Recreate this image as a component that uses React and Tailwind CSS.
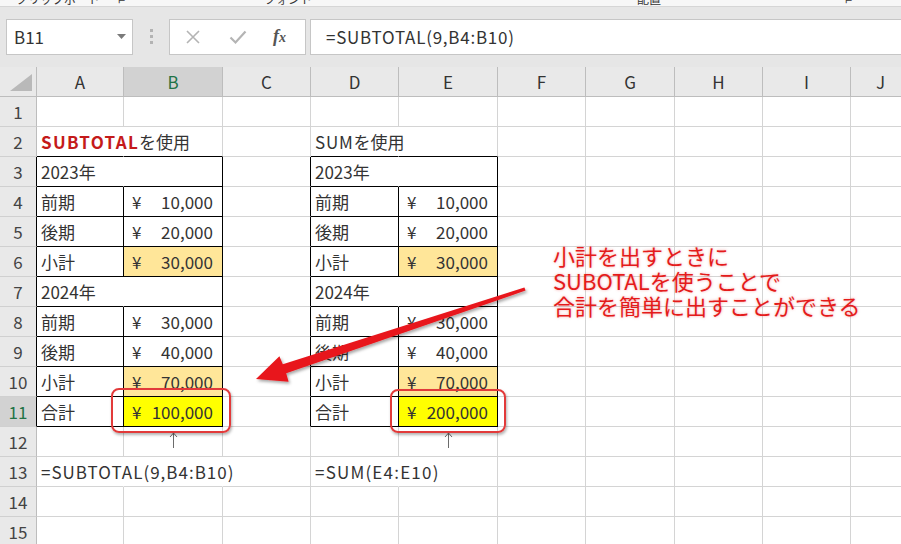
import React from 'react';

const COLS = ['A', 'B', 'C', 'D', 'E', 'F', 'G', 'H', 'I', 'J'];

// border colour classes, written out in full
const R_GRID = 'border-r-[#d4d4d4]';
const R_BLACK = 'border-r-black';
const R_NONE = 'border-r-transparent';
const B_GRID = 'border-b-[#d4d4d4]';
const B_BLACK = 'border-b-black';

const ORANGE = 'bg-[#ffe699]';
const YELLOW = 'bg-[#ffff00]';

function Money({ v }) {
  return (
    <div className="flex w-full justify-between pl-[8px] pr-[9px]">
      <span>¥</span>
      <span>{v}</span>
    </div>
  );
}

function UpArrow() {
  return (
    <div className="flex h-full w-full items-start justify-center pt-[5px]">
      <svg width="9" height="16" viewBox="0 0 9 16">
        <path d="M4.5 1 L4.5 16" stroke="#6b6b6b" strokeWidth="1" fill="none" />
        <path d="M1 5 L4.5 1 L8 5" stroke="#6b6b6b" strokeWidth="1" fill="none" />
      </svg>
    </div>
  );
}

const data = {
  2: {
    1: (
      <span className="whitespace-nowrap">
        <span className="font-bold tracking-[1.3px] text-[#c41a1a]">SUBTOTAL</span>を使用
      </span>
    ),
    4: (
      <span className="whitespace-nowrap">
        <span className="tracking-[0.8px]">SUM</span>を使用
      </span>
    ),
  },
  3: { 1: '2023年', 4: '2023年' },
  4: { 1: '前期', 2: <Money v="10,000" />, 4: '前期', 5: <Money v="10,000" /> },
  5: { 1: '後期', 2: <Money v="20,000" />, 4: '後期', 5: <Money v="20,000" /> },
  6: { 1: '小計', 2: <Money v="30,000" />, 4: '小計', 5: <Money v="30,000" /> },
  7: { 1: '2024年', 4: '2024年' },
  8: { 1: '前期', 2: <Money v="30,000" />, 4: '前期', 5: <Money v="30,000" /> },
  9: { 1: '後期', 2: <Money v="40,000" />, 4: '後期', 5: <Money v="40,000" /> },
  10: { 1: '小計', 2: <Money v="70,000" />, 4: '小計', 5: <Money v="70,000" /> },
  11: { 1: '合計', 2: <Money v="100,000" />, 4: '合計', 5: <Money v="200,000" /> },
  12: { 2: <UpArrow />, 5: <UpArrow /> },
  13: {
    1: <span className="whitespace-nowrap tracking-[1px]">=SUBTOTAL(9,B4:B10)</span>,
    4: <span className="whitespace-nowrap tracking-[1.2px]">=SUM(E4:E10)</span>,
  },
};

function rightBorder(r, c) {
  const inTable = r >= 3 && r <= 11;
  if (inTable && (c === 2 || c === 3 || c === 5)) return R_BLACK;
  if (inTable && (c === 1 || c === 4)) return r === 3 || r === 7 ? R_NONE : R_BLACK;
  if (r === 2 && (c === 1 || c === 4)) return R_NONE;
  if (r === 13 && (c === 1 || c === 2 || c === 4)) return R_NONE;
  return R_GRID;
}

function bottomBorder(r, c) {
  if (r >= 2 && r <= 11 && (c === 1 || c === 2 || c === 4 || c === 5)) return B_BLACK;
  return B_GRID;
}

function fill(r, c) {
  if ((r === 6 || r === 10) && (c === 2 || c === 5)) return ORANGE;
  if (r === 11 && (c === 2 || c === 5)) return YELLOW;
  return '';
}

function FormulaBar() {
  return (
    <div className="flex flex-col">
      {/* bottom edge of the ribbon, group labels cut off */}
      <div className="relative h-[7px] overflow-hidden border-b border-[#d6d6d6] bg-[#f7f7f7] text-[12px] leading-[12px] text-[#333]">
        <span className="absolute left-[16px] top-[-7px]">クリップボード</span>
        <span className="absolute left-[118px] top-[-7px]">⌐</span>
        <span className="absolute left-[264px] top-[-7px]">フォント</span>
        <span className="absolute left-[637px] top-[-7px]">配置</span>
        <span className="absolute left-[845px] top-[-7px]">⌐</span>
      </div>
      <div className="flex h-[60px] items-center bg-[#e6e6e6] pb-[1px]">
        <div className="ml-[6px] flex h-[36px] w-[127px] items-center justify-between border border-[#c6c6c6] bg-white pl-[7px] pr-[6px] text-[17px] text-[#333]">
          <span>B11</span>
          <svg width="9" height="6" viewBox="0 0 9 6">
            <path d="M0 0 L9 0 L4.5 5 Z" fill="#7a7a7a" />
          </svg>
        </div>
        <div className="ml-[17px] flex flex-col gap-[3px]">
          <span className="h-[3px] w-[3px] bg-[#b3b3b3]" />
          <span className="h-[3px] w-[3px] bg-[#b3b3b3]" />
          <span className="h-[3px] w-[3px] bg-[#b3b3b3]" />
        </div>
        <div className="ml-[16px] flex h-[36px] w-[137px] items-center border border-[#c6c6c6] bg-white">
          <svg className="ml-[15px]" width="16" height="16" viewBox="0 0 16 16">
            <path d="M2 2 L14 14 M14 2 L2 14" stroke="#b4b4b4" strokeWidth="1.6" fill="none" />
          </svg>
          <svg className="ml-[28px]" width="18" height="16" viewBox="0 0 18 16">
            <path d="M1.5 8.5 L6.5 13.5 L16.5 2.5" stroke="#b4b4b4" strokeWidth="2.2" fill="none" />
          </svg>
          <span className="ml-[26px] font-['Liberation_Serif',serif] text-[18px] font-bold italic text-[#555]">
            f<span className="text-[14px]">x</span>
          </span>
        </div>
        <div className="ml-[4px] flex h-[36px] flex-1 items-center border-y border-l border-[#c6c6c6] bg-white pl-[15px] text-[17px] tracking-[0.75px] text-[#333]">
          =SUBTOTAL(9,B4:B10)
        </div>
      </div>
    </div>
  );
}

function BigArrow() {
  return (
    <svg className="pointer-events-none absolute left-0 top-0" width="901" height="544">
      <defs>
        <filter id="sh" x="-20%" y="-20%" width="140%" height="140%">
          <feDropShadow dx="1.5" dy="2" stdDeviation="1.6" floodColor="#000" floodOpacity="0.35" />
        </filter>
      </defs>
      <polygon
        filter="url(#sh)"
        fill="#e8151b"
        points="525.6,290.6 286.2,373.2 288.6,381.8 256,379 279.4,356.2 282.8,364.2 524.4,287.4"
      />
    </svg>
  );
}

export default function App() {
  const rows = Array.from({ length: 15 }, (_, i) => i + 1);
  return (
    <div className="relative h-[544px] w-[901px] overflow-hidden bg-white font-['Noto_Sans_CJK_JP',sans-serif] text-[#333]">
      <FormulaBar />

      <div className="grid grid-cols-[37px_87px_99px_88px_88px_99px_88px_89px_88px_88px_60px]">
        {/* header row */}
        <div className="relative h-[30px] border-b border-r border-[#bdbdbd] bg-[#e9e9e9]">
          <svg className="absolute bottom-[5px] right-[4px]" width="22" height="17" viewBox="0 0 22 17">
            <path d="M22 0 L22 17 L0 17 Z" fill="#b9b9b9" />
          </svg>
        </div>
        {COLS.map((c) => (
          <div
            key={c}
            className={`flex h-[30px] items-center justify-center border-b border-r border-[#bdbdbd] text-[17px] ${
              c === 'B' ? 'bg-[#d2d2d2] text-[#217346]' : 'bg-[#e9e9e9] text-[#333]'
            }`}
          >
            {c}
          </div>
        ))}

        {rows.map((r) => (
          <React.Fragment key={r}>
            <div
              className={`flex h-[30px] items-center justify-center border-b border-r border-b-[#d0d0d0] text-[17px] ${
                r >= 3 && r <= 11 ? 'border-r-black' : 'border-r-[#bdbdbd]'
              } ${r === 11 ? 'bg-[#d2d2d2] text-[#217346]' : 'bg-[#e9e9e9] text-[#444]'}`}
            >
              {r}
            </div>
            {COLS.map((_, i) => {
              const c = i + 1;
              const content = data[r] && data[r][c];
              return (
                <div
                  key={c}
                  className={`flex h-[30px] items-center overflow-visible border-b border-r text-[17px] ${rightBorder(
                    r,
                    c
                  )} ${bottomBorder(r, c)} ${fill(r, c)} ${c === 2 || c === 5 ? 'pl-0' : 'pl-[4px]'}`}
                >
                  {content}
                </div>
              );
            })}
          </React.Fragment>
        ))}
      </div>

      {/* red highlight frames */}
      <div className="pointer-events-none absolute left-[111px] top-[388px] h-[45px] w-[120px] rounded-[8px] border-2 border-[#e23a3a] shadow-[1px_2px_3px_rgba(0,0,0,0.3)]" />
      <div className="pointer-events-none absolute left-[390px] top-[389px] h-[44px] w-[116px] rounded-[8px] border-2 border-[#e23a3a] shadow-[1px_2px_3px_rgba(0,0,0,0.3)]" />

      <BigArrow />

      {/* annotation */}
      <div className="pointer-events-none absolute left-[553px] top-[243px] text-[22px] leading-[25px] text-[#e41b1b] [text-shadow:0_0_3px_rgba(230,0,0,0.35)]">
        <div>小計を出すときに</div>
        <div>SUBOTALを使うことで</div>
        <div>合計を簡単に出すことができる</div>
      </div>
    </div>
  );
}
